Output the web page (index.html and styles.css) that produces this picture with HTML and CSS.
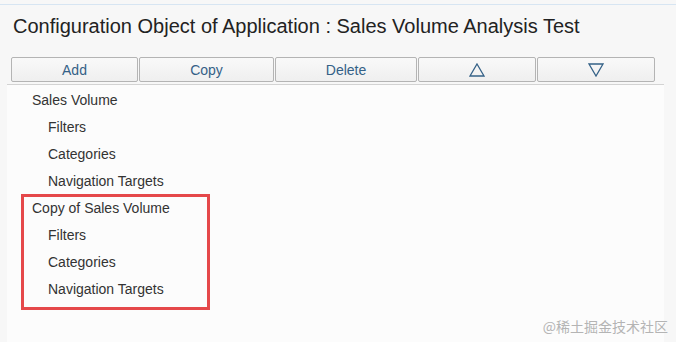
FILE: index.html
```html
<!DOCTYPE html>
<html lang="en">

<head>
    <meta charset="UTF-8">
    <meta name="viewport" content="width=device-width, initial-scale=1.0">
    <title>Configuration Object</title>
    <link rel="stylesheet" href="styles.css">
</head>

<body>
    <div class="page">
        <h1 class="title">Configuration Object of Application : Sales Volume Analysis Test</h1>

        <div class="toolbar">
            <div class="btn btn-add">Add</div>
            <div class="btn btn-copy">Copy</div>
            <div class="btn btn-delete">Delete</div>
            <div class="btn btn-up">
                <svg viewBox="0 0 16 14" class="tri">
                    <polygon points="8,1 15,13 1,13" />
                </svg>
            </div>
            <div class="btn btn-down">
                <svg viewBox="0 0 16 14" class="tri">
                    <polygon points="1,1 15,1 8,13" />
                </svg>
            </div>
        </div>

        <div class="panel">
            <div class="tree">
                <div class="node">Sales Volume</div>
                <div class="node child">Filters</div>
                <div class="node child">Categories</div>
                <div class="node child">Navigation Targets</div>
                <div class="group marked">
                    <div class="node">Copy of Sales Volume</div>
                    <div class="node child">Filters</div>
                    <div class="node child">Categories</div>
                    <div class="node child">Navigation Targets</div>
                </div>
            </div>
        </div>

        <div class="watermark">@稀土掘金技术社区</div>
    </div>
</body>

</html>
```

FILE: styles.css
```css
body {
    margin: 0;
    background-color: #f7f7f7;
    font-family: "Liberation Sans", Arial, sans-serif;
    color: #333;
}

.page {
    position: relative;
    height: 342px;
    margin-top: 4px;
    border-top: 1px solid #d7e5f2;
    overflow: hidden;
}

.title {
    margin: 0;
    padding: 9px 0 0 13px;
    height: 30px;
    font-size: 20px;
    font-weight: normal;
    line-height: 24px;
    color: #222;
}

.toolbar {
    display: flex;
    margin: 13px 0 0 11px;
    width: 645px;
    height: 25px;
    gap: 1px;
}

.btn {
    display: flex;
    align-items: center;
    justify-content: center;
    box-sizing: border-box;
    height: 25px;
    border: 1px solid #b4b4b4;
    border-radius: 2px;
    background: linear-gradient(#f9f9f9, #efefef);
    font-size: 14px;
    color: #346187;
}

.btn-add { width: 127px; }
.btn-copy { width: 135px; }
.btn-delete { width: 142px; }
.btn-up { width: 118px; }
.btn-down { width: 118px; }

.tri {
    width: 16px;
    height: 14px;
}

.tri polygon {
    fill: none;
    stroke: #346187;
    stroke-width: 1.3;
    stroke-linejoin: miter;
}

.panel {
    margin: 2px 0 0 7px;
    width: 657px;
    height: 260px;
    border-top: 1px solid #d3d3d3;
    background-color: #fcfcfc;
}

.tree {
    padding-top: 2px;
}

.node {
    height: 27px;
    line-height: 27px;
    padding-left: 25px;
    font-size: 14px;
    color: #333;
}

.node.child {
    padding-left: 41px;
}

.group {
    margin-left: 15px;
    width: 187px;
    padding-bottom: 6px;
}

.group .node {
    padding-left: 10px;
}

.group .node.child {
    padding-left: 26px;
}

.marked {
    outline: 3px solid #e5484a;
    outline-offset: -2px;
}

.watermark {
    position: absolute;
    right: 8px;
    bottom: 11px;
    font-family: "Noto Sans CJK SC", sans-serif;
    font-size: 14px;
    color: #b4b4b4;
}
```
